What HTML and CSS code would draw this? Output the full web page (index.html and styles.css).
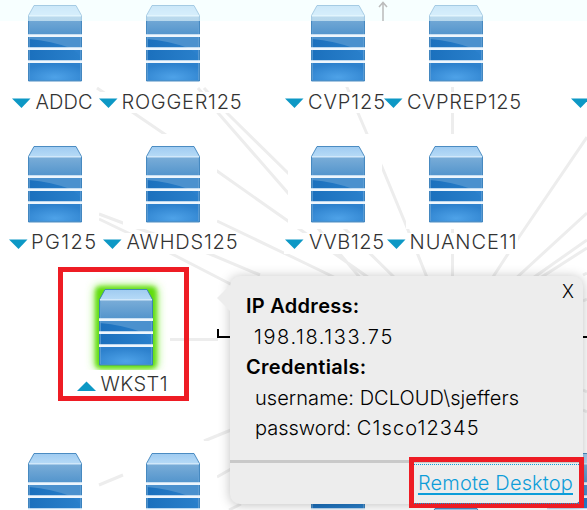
FILE: index.html
```
<!DOCTYPE html>
<html lang="en">
<head>
<meta charset="utf-8">
<title>Topology</title>
<link rel="stylesheet" href="styles.css">
</head>
<body>
<main class="canvas">
<svg class="diagram" width="587" height="510" viewBox="0 0 587 510">
  <defs>
    <linearGradient id="top" x1="0" y1="0" x2="0" y2="1"><stop offset="0" stop-color="#9fcbf1"/><stop offset="1" stop-color="#b7dbf7"/></linearGradient>
    <linearGradient id="b1" x1="0" y1="0" x2="0" y2="1"><stop offset="0" stop-color="#7aadd8"/><stop offset="1" stop-color="#5294cc"/></linearGradient>
    <radialGradient id="b4" cx=".5" cy=".8" r=".7"><stop offset="0" stop-color="#4ea2e8"/><stop offset="1" stop-color="#2d81cd"/></radialGradient>
    <linearGradient id="b2" x1="0" x2="1"><stop offset="0" stop-color="#1b70bd"/><stop offset="1" stop-color="#2a80cb"/></linearGradient>
    <filter id="glow" x="-40%" y="-40%" width="180%" height="180%"><feGaussianBlur stdDeviation="5"/></filter>
    <filter id="halo" x="-40%" y="-40%" width="180%" height="180%"><feGaussianBlur stdDeviation="2"/></filter>
    <symbol id="server" width="54" height="77" viewBox="0 0 54 77">
      <path fill="url(#top)" d="M6 .5h42l5.500 10.500H.5z"/>
      <path fill="url(#b1)" d="M.5 11h53v19H.5z"/>
      <path fill="url(#b2)" d="M.5 30h53v27H.5z"/>
      <path fill="#4b91ce" d="M.5 30h53v13H42Q24 36 .5 34z"/>
      <path fill="#2c81cd" d="M42 43h11.500v12q-3-8-11.500-12z"/>
      <path fill="url(#b4)" d="M.5 57h53v19H.5z"/>
      <path fill="none" stroke="#66a3d6" stroke-opacity=".7" d="M1.500 12v63.500h51V12"/>
      <path fill="none" stroke="#347db9" stroke-opacity=".85" d="M.5 10.500V76h53V10.500L48 .5H6z"/>
      <path fill="#d1e8fa" d="M1 10h52v1.500H1z"/>
      <path fill="#eef6fd" d="M0 29.300h54v2.700H0zM0 42.300h54v2.700H0zM0 55.300h54v2.700H0z"/>
    </symbol>
    <path id="down" fill="#0d98c5" d="M0 0h18.500l-9 9.500z"/>
  </defs>

  <g class="links">
    <path d="M97 88L163 133L217 171L288 221L372 280M198 88L219 114L288 193L362 280M204 88L228 114L288 173L397 280M99 214L123 223L210 254L260 275M99 219L172 254L240 289M217 221L288 255L340 280M346 85L367 134L382 167L406 225L428 280M452.500 82V280M587 137L517 240L491 280M587 213L514 280M587 240L530 280M587 248L537 280M583 275L587 273M583 301L587 299"/>
    <path d="M170 339.500h48M99 485L123 475M204 441L231 430M217 477L231 469M229 510L241 504M583 390L587 392M583 410L587 412"/>
  </g>
  <path class="bracket" d="M218 329v8h13M583 337h4"/>

  <g class="tiles">
    <rect x="0" y="0" width="99" height="87"/><rect x="123" y="0" width="94" height="87"/><rect x="288" y="0" width="94" height="87"/><rect x="406" y="0" width="94" height="87"/>
    <rect x="0" y="134" width="99" height="95"/><rect x="123" y="134" width="94" height="95"/><rect x="288" y="134" width="94" height="95"/><rect x="406" y="134" width="94" height="95"/>
    <rect x="10" y="92" width="231" height="21"/><rect x="284" y="92" width="237" height="21"/>
    <rect x="8" y="233" width="230" height="21"/><rect x="284" y="233" width="234" height="21"/>
    <rect x="190" y="441" width="27" height="69"/>
  </g>

  <rect class="glow" x="95" y="286" width="62" height="83" rx="5" filter="url(#glow)"/>
  <rect class="halo" x="96" y="287" width="60" height="81" rx="4" filter="url(#halo)"/>
  <rect x="80" y="370" width="90" height="16" fill="#fff"/>

  <use href="#server" x="28" y="5"/><use href="#server" x="146" y="5"/><use href="#server" x="311" y="5"/><use href="#server" x="429" y="5"/>
  <use href="#server" x="28" y="146"/><use href="#server" x="146" y="146"/><use href="#server" x="311" y="146"/><use href="#server" x="429" y="146"/>
  <use href="#server" x="99" y="289"/>
  <use href="#server" x="28" y="453"/><use href="#server" x="146" y="453"/><use href="#server" x="311" y="453"/><use href="#server" x="429" y="508"/><use href="#server" x="547" y="453"/>

  <rect class="band" width="587" height="21"/>
  <path class="up" d="M383 21V3M379 7l4-4.500L387 7"/>

  <use href="#down" x="12" y="98.500"/><use href="#down" x="99" y="98.500"/><use href="#down" x="285" y="98.500"/><use href="#down" x="384" y="98.500"/><use href="#down" x="571" y="98.500"/>
  <use href="#down" x="9" y="239.500"/><use href="#down" x="103" y="239.500"/><use href="#down" x="285" y="239.500"/><use href="#down" x="387" y="239.500"/>
  <path fill="#0d98c5" d="M77 391h19l-9.500-9.500z"/>

  <g class="labels">
    <text x="35.500" y="109" textLength="57">ADDC</text>
    <text x="121.500" y="109" textLength="120">ROGGER125</text>
    <text x="308" y="109" textLength="77">CVP125</text>
    <text x="407" y="109" textLength="114">CVPREP125</text>
    <text x="31" y="249" textLength="65">PG125</text>
    <text x="126.500" y="249" textLength="111">AWHDS125</text>
    <text x="309" y="249" textLength="75">VVB125</text>
    <text x="409.500" y="249" textLength="107">NUANCE11</text>
    <text x="100.500" y="391" textLength="67">WKST1</text>
  </g>
  <rect class="mark" x="60.500" y="269.500" width="126" height="129"/>
</svg>

<section class="popup">
  <button class="close">X</button>
  <dl class="details">
    <dt>IP Address:</dt>
    <dd class="address">198.18.133.75</dd>
    <dt>Credentials:</dt>
    <dd class="user">username: DCLOUD\sjeffers</dd>
    <dd>password: <span class="secret">C1sco12345</span></dd>
  </dl>
  <footer class="actions"><a class="remote" href="#">Remote Desktop</a></footer>
</section>
<div class="highlight"></div>
</main>
</body>
</html>
```
FILE: styles.css
```
* { box-sizing: border-box; }
body {
  margin: 0;
  overflow: hidden;
  background: #fff;
  font-family: Inter, "Liberation Sans", sans-serif;
  font-size: 20px;
  font-weight: 300;
}
.canvas { position: relative; width: 587px; height: 510px; overflow: hidden; }
.diagram { display: block; }
.links { fill: none; stroke: #ededed; stroke-width: 3; }
.bracket { fill: none; stroke: #000; stroke-width: 2; }
.tiles { fill: #fff; }
.glow { fill: #7eea3a; }
.halo { fill: #62dc10; }
.band { fill: #f0ffff; fill-opacity: .55; }
.up { fill: none; stroke: #bbb; stroke-width: 1.5; }
.labels { fill: #333; }
.mark { fill: none; stroke: #ee1c24; stroke-width: 5; }

.popup {
  position: absolute;
  left: 230px;
  top: 276px;
  width: 353px;
  height: 228px;
  border-radius: 10px;
  background: #ededed;
  box-shadow: 0 1px 12px rgba(0, 0, 0, .25);
  color: #000;
}
.popup::before {
  content: "";
  position: absolute;
  left: -13px;
  top: 9px;
  border: 13px solid transparent;
  border-left: 0;
  border-right-color: #ededed;
}
.close {
  position: absolute;
  right: 9px;
  top: 4px;
  padding: 0;
  border: 0;
  background: none;
  font: 300 18px/24px Inter, sans-serif;
  color: #000;
}
.details { height: 184px; margin: 0; padding: 15px 16px 0; line-height: 30.5px; white-space: nowrap; }
.details dt { font-weight: 600; letter-spacing: .28px; }
.details dd { margin: 0 0 0 9px; }
.details .address { margin-left: 8px; letter-spacing: 1.6px; }
.user { letter-spacing: .05px; }
.secret { letter-spacing: 1.1px; }
.actions {
  display: flex;
  justify-content: flex-end;
  height: 44px;
  border-top: 3px solid #c9c9c9;
  padding: 5px 10px 0 0;
  line-height: 30px;
}
.remote { color: #0d9dd9; letter-spacing: .15px; text-decoration: underline; text-decoration-thickness: 2px; text-underline-offset: 3px; text-decoration-skip-ink: none; }
.highlight {
  position: absolute;
  left: 409px;
  top: 457px;
  width: 175px;
  height: 51px;
  border: 5px solid #ee1c24;
}
.highlight::before {
  content: "";
  display: block;
  height: 38px;
  margin-top: 2px;
  border-top: 1px dotted #0d9dd9;
  border-bottom: 1px dotted #0d9dd9;
}
```
